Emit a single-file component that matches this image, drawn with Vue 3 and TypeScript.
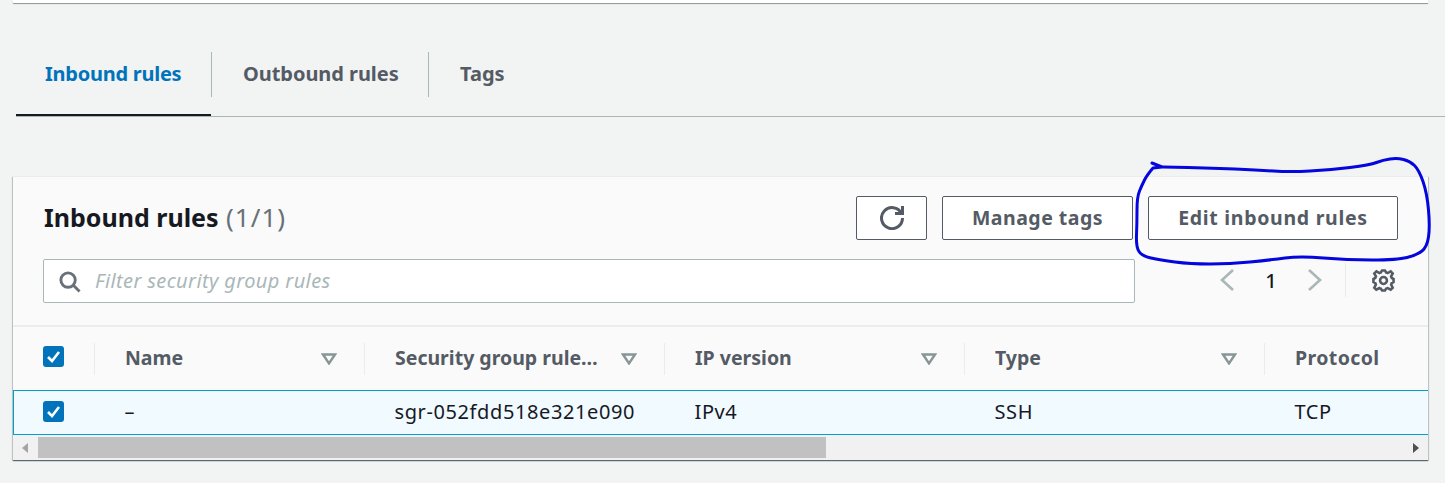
<script setup lang="ts">
const columns = [
  { title: 'Name', value: '–', sort: true },
  { title: 'Security group rule ID', value: 'sgr-052fdd518e321e090', sort: true },
  { title: 'IP version', value: 'IPv4', sort: true },
  { title: 'Type', value: 'SSH', sort: true },
  { title: 'Protocol', value: 'TCP', sort: false },
]

const pts: [number, number][] = [
  [1152, 163], [1162, 167], [1153, 168], [1147, 175], [1142, 185], [1137, 197], [1137, 223],
  [1136, 247], [1142, 256], [1160, 260], [1190, 264], [1230, 264], [1270, 260], [1300, 256],
  [1347, 260], [1397, 260], [1417, 255], [1427, 247], [1430, 227], [1427, 193], [1419, 170],
  [1410, 161], [1397, 158], [1383, 160], [1370, 165], [1330, 170], [1290, 172], [1257, 170],
  [1213, 168], [1163, 167],
]
function smooth(p: [number, number][]): string {
  let d = `M${p[0][0]} ${p[0][1]} L${p[1][0]} ${p[1][1]} L${p[2][0]} ${p[2][1]}`
  for (let i = 3; i < p.length - 1; i++) {
    const mx = (p[i][0] + p[i + 1][0]) / 2
    const my = (p[i][1] + p[i + 1][1]) / 2
    d += ` Q${p[i][0]} ${p[i][1]} ${mx} ${my}`
  }
  const last = p[p.length - 1]
  return `${d} L${last[0]} ${last[1]}`
}
const scribble = smooth(pts)
</script>

<template>
  <div class="page">
    <div class="top-strip"></div>

    <nav class="tabs">
      <div class="tab active"><span>Inbound rules</span></div>
      <div class="tab second"><span>Outbound rules</span></div>
      <div class="tab third"><span>Tags</span></div>
    </nav>

    <section class="card">
      <header class="card-head">
        <div class="title-row">
          <h2 class="title">Inbound rules <span class="count">(1/1)</span></h2>
          <div class="actions">
            <button class="btn icon-btn" aria-label="Refresh">
              <svg width="24" height="24" viewBox="0 0 16 16" fill="none" stroke="#545b64" stroke-width="2">
                <path d="M10 5h5V0" />
                <path d="M15 8a7 7 0 1 1-.7-3" />
              </svg>
            </button>
            <button class="btn manage">Manage tags</button>
            <button class="btn edit">Edit inbound rules</button>
          </div>
        </div>
        <div class="filter-row">
          <div class="filter">
            <svg width="23" height="23" viewBox="0 0 16 16" fill="none" stroke="#687078" stroke-width="2">
              <circle cx="7" cy="7" r="5" />
              <path d="M15 15l-4.5-4.5" />
            </svg>
            <span class="placeholder">Filter security group rules</span>
          </div>
          <div class="pager">
            <svg class="chev" width="16" height="24" viewBox="0 0 16 24" fill="none" stroke="#aab7b8" stroke-width="2.6">
              <path d="M14 2L3 12l11 10" />
            </svg>
            <span class="page-no">1</span>
            <svg class="chev" width="16" height="24" viewBox="0 0 16 24" fill="none" stroke="#aab7b8" stroke-width="2.6">
              <path d="M2 2l11 10L2 22" />
            </svg>
            <span class="pager-div"></span>
            <svg class="gear" width="23" height="23" viewBox="0 0 16 16" fill="none" stroke="#545b64" stroke-width="1.8">
              <path d="M13.3 5.2l1.1-2.1L13 1.7l-2.1 1.1c-.3-.2-.7-.3-1.1-.4L9 1H7l-.8 1.4c-.3.1-.7.2-1 .4L3.1 1.6 1.6 3.1l1.1 2.1c-.2.3-.3.7-.4 1L1 7v2l1.3.8c.1.4.3.7.4 1.1l-1.1 2.1 1.4 1.4 2.1-1.1c.3.2.7.3 1.1.4L7 15h2l.8-1.3c.4-.1.7-.3 1.1-.4l2.1 1.1 1.4-1.4-1.1-2.1c.2-.3.3-.7.4-1.1L15 9V7l-1.3-.8c-.1-.3-.2-.7-.4-1z" />
              <circle cx="8" cy="8" r="2.4" />
            </svg>
          </div>
        </div>
      </header>

      <div class="grid head-row">
        <div class="cell check-cell">
          <span class="checkbox">
            <svg width="15" height="15" viewBox="0 0 15 15" fill="none" stroke="#fff" stroke-width="2.6"><path d="M2 8l4 4 7-9" /></svg>
          </span>
        </div>
        <div v-for="c in columns" :key="c.title" class="cell head-cell" :class="{ last: !c.sort }">
          <span class="head-text">{{ c.title }}</span>
          <svg v-if="c.sort" class="sort" width="16" height="12" viewBox="0 0 16 12" fill="none" stroke="#879596" stroke-width="2.4">
            <path d="M2 1.5h12L8 10.4z" />
          </svg>
        </div>
      </div>

      <div class="grid data-row">
        <div class="cell check-cell">
          <span class="checkbox">
            <svg width="15" height="15" viewBox="0 0 15 15" fill="none" stroke="#fff" stroke-width="2.6"><path d="M2 8l4 4 7-9" /></svg>
          </span>
        </div>
        <div v-for="c in columns" :key="c.value" class="cell data-cell">{{ c.value }}</div>
      </div>

      <div class="scrollbar">
        <span class="arrow left"></span>
        <div class="track"><div class="thumb"></div></div>
        <span class="arrow right"></span>
      </div>
    </section>

    <svg class="scribble" width="1445" height="483" viewBox="0 0 1445 483" fill="none" stroke="#0505dd" stroke-width="3" stroke-linecap="round" stroke-linejoin="round">
      <path :d="scribble" />
    </svg>
  </div>
</template>

<style>
html, body { margin: 0; background: #f2f3f3; }
</style>

<style scoped>
.page {
  position: relative;
  width: 1445px;
  height: 483px;
  overflow: hidden;
  background: #f2f3f3;
  font-family: "Noto Sans", "Open Sans", sans-serif;
  color: #16191f;
}
.top-strip {
  height: 3px;
  margin: 0 17px 0 13px;
  background: #fff;
  box-shadow: 0 1px 1px #879596;
}
.tabs {
  display: flex;
  height: 45px;
  margin: 49px 0 0 16px;
  padding-bottom: 19px;
  border-bottom: 1px solid #aab7b8;
  position: relative;
}
.tab {
  position: relative;
  display: flex;
  align-items: center;
  height: 45px;
  font-size: 20px;
  font-weight: 700;
  color: #545b64;
  border-right: 1px solid #aab7b8;
  box-sizing: border-box;
}
.tab span { display: block; margin-top: -3px; }
.tab.active {
  width: 196px;
  padding-left: 29px;
  color: #0073bb;
  letter-spacing: -0.25px;
}
.tab.active::after {
  content: "";
  position: absolute;
  left: 0;
  right: 0;
  bottom: -19px;
  height: 2px;
  background: #16191f;
}
.tab.second { width: 217px; padding-left: 31px; letter-spacing: -0.05px; }
.tab.third { border-right: 0; padding-left: 31px; }
.card {
  margin: 59px 0 0 13px;
  width: 1415px;
  height: 284px;
  background: #fff;
  box-shadow: 0 1px 1px rgba(0, 28, 36, 0.5), 1px 1px 1px rgba(0, 28, 36, 0.15), -1px 1px 1px rgba(0, 28, 36, 0.15);
}
.card-head {
  height: 151px;
  box-sizing: border-box;
  padding: 19px 30px 0;
  background: #fafafa;
  border-bottom: 2px solid #eaeded;
  border-top: 1px solid #eaeded;
}
.title-row {
  display: flex;
  justify-content: space-between;
  align-items: center;
  height: 44px;
}
.title {
  margin: 0 0 2px 1px;
  font-size: 25px;
  line-height: 44px;
  font-weight: 700;
  color: #16191f;
}
.count { font-weight: 400; font-size: 26px; margin-left: 1px; color: #687078; letter-spacing: 1px; }
.actions { display: flex; gap: 15px; }
.btn {
  height: 44px;
  box-sizing: border-box;
  background: #fff;
  border: 1px solid #545b64;
  border-radius: 2px;
  font-family: inherit;
  font-size: 19.5px;
  font-weight: 700;
  color: #545b64;
  letter-spacing: 0.5px;
  display: flex;
  align-items: center;
  justify-content: center;
  padding: 0 0 2px;
}
.icon-btn { width: 71px; padding: 0; }
.manage { width: 191px; }
.edit { width: 250px; letter-spacing: 0.7px; }
.filter-row {
  display: flex;
  align-items: center;
  margin-top: 19px;
}
.filter {
  width: 1092px;
  height: 44px;
  box-sizing: border-box;
  background: #fff;
  border: 1px solid #aab7b8;
  border-radius: 2px;
  display: flex;
  align-items: center;
  padding-left: 14px;
  gap: 14px;
}
.placeholder {
  font-size: 20px;
  font-style: italic;
  color: #aab7b8;
  letter-spacing: 0.38px;
  margin-bottom: 2px;
}
.pager {
  display: flex;
  align-items: center;
  margin-left: 84px;
  margin-bottom: 2px;
  height: 40px;
}
.page-no { width: 72px; text-align: center; font-size: 20px; font-weight: 500; }
.pager-div {
  width: 1px;
  height: 34px;
  background: #eaeded;
  margin-left: 22px;
  margin-right: 26px;
}
.grid {
  display: grid;
  grid-template-columns: 82px 270px 300px 300px 300px 1fr;
  align-items: center;
}
.head-row { height: 63px; background: #fafafa; }
.cell { display: flex; align-items: center; min-width: 0; box-sizing: border-box; }
.check-cell { padding-left: 30px; height: 32px; }
.head-row .check-cell, .head-cell { border-right: 1px solid #eaeded; }
.head-row .checkbox { margin-bottom: 5px; }
.data-row .checkbox { margin-bottom: 3px; }
.head-cell { height: 32px; padding-left: 30px; padding-right: 27px; justify-content: space-between; gap: 20px; }
.head-cell.last { border-right: 0; }
.head-text {
  font-size: 19.5px;
  font-weight: 700;
  color: #545b64;
  white-space: nowrap;
  overflow: hidden;
  text-overflow: ellipsis;
  margin-bottom: 2px;
}
.last .head-text { letter-spacing: 0.4px; }
.sort { flex: none; }
.checkbox {
  width: 21px;
  height: 21px;
  border-radius: 3px;
  background: #0073bb;
  display: flex;
  align-items: center;
  justify-content: center;
}
.data-row {
  height: 45px;
  box-sizing: border-box;
  background: #f1faff;
  border: 1px solid #00a1c9;
  border-width: 1px 0 1px 1px;
  grid-template-columns: 81px 270px 300px 300px 300px 1fr;
}
.data-row .check-cell { padding-left: 29px; }
.data-cell { padding-left: 29.5px; padding-bottom: 2px; font-size: 20px; letter-spacing: 0.6px; color: #16191f; white-space: nowrap; }
.scrollbar {
  display: flex;
  align-items: center;
  height: 25px;
  background: #f1f1f1;
  position: relative;
}
.arrow { width: 0; height: 0; border-style: solid; flex: none; }
.arrow.left { margin-left: 9px; margin-right: 10px; border-width: 5.5px 6px 5.5px 0; border-color: transparent #a3a3a3 transparent transparent; }
.arrow.right { margin-left: 10px; margin-right: 9px; border-width: 5.5px 0 5.5px 6px; border-color: transparent transparent transparent #505050; }
.track { flex: 1; height: 21px; }
.thumb { width: 788px; height: 100%; background: #c1c1c1; }
.scribble { position: absolute; left: 0; top: 0; pointer-events: none; }
</style>
